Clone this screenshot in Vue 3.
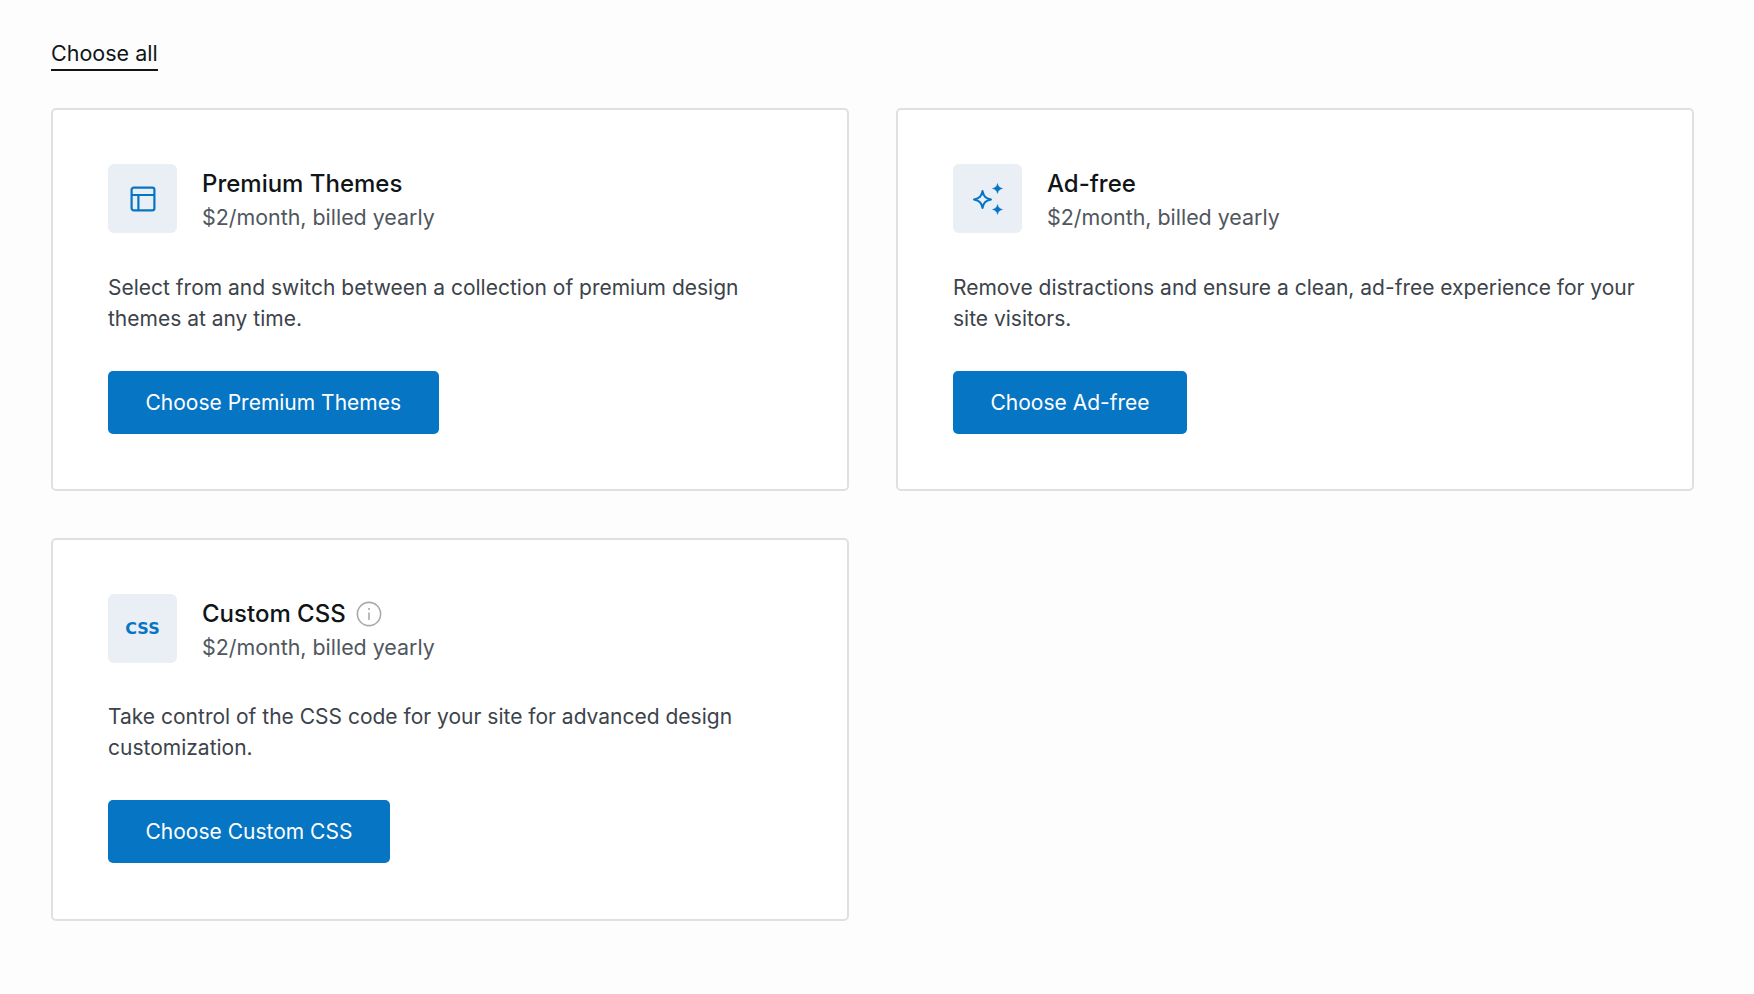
<template>
  <div class="page">
    <a class="choose-all">Choose all</a>
    <div class="grid">
      <div v-for="item in items" :key="item.name" class="card">
        <div class="head">
          <div class="icon">
            <svg v-if="item.icon === 'layout'" width="28" height="28" viewBox="0 0 28 28" fill="none" stroke="#0675c4" stroke-width="2.2">
              <rect x="2.6" y="2.6" width="22.8" height="22.8" rx="2.2" />
              <path d="M2.6 10h22.8M9.4 10v15.4" />
            </svg>
            <svg v-else-if="item.icon === 'sparkle'" width="32" height="32" viewBox="0 0 32 32">
              <path d="M10.5 8C11.6 13.2 13.2 15.2 19 16.5C13.2 17.8 11.6 19.8 10.5 25C9.4 19.8 7.8 17.8 2 16.5C7.8 15.2 9.4 13.2 10.5 8Z" fill="none" stroke="#0675c4" stroke-width="2" stroke-linejoin="round" />
              <path d="M25.5 .5C26.3 3.6 27.4 4.7 30.5 5.5C27.4 6.3 26.3 7.4 25.5 10.5C24.7 7.4 23.6 6.3 20.5 5.5C23.6 4.7 24.7 3.6 25.5 .5Z" fill="#0675c4" stroke="#0675c4" stroke-width=".4" />
              <path d="M25.5 21.5C26.3 24.6 27.4 25.7 30.5 26.5C27.4 27.3 26.3 28.4 25.5 31.5C24.7 28.4 23.6 27.3 20.5 26.5C23.6 25.7 24.7 24.6 25.5 21.5Z" fill="#0675c4" stroke="#0675c4" stroke-width=".4" />
            </svg>
            <span v-else class="css-mark">CSS</span>
          </div>
          <div class="titles">
            <div class="name">
              {{ item.name }}
              <svg v-if="item.info" class="info" width="26" height="26" viewBox="0 0 26 26" fill="none" stroke="#a7aaad" stroke-width="1.6">
                <circle cx="13" cy="13" r="11.6" />
                <path d="M13 11.5v7.5" />
                <path d="M13 7v2" />
              </svg>
            </div>
            <div class="price">$2/month, billed yearly</div>
          </div>
        </div>
        <p class="desc">{{ item.desc }}</p>
        <button class="btn">Choose {{ item.name }}</button>
      </div>
    </div>
  </div>
</template>

<script setup>
const items = [
  {
    name: "Premium Themes",
    icon: "layout",
    desc: "Select from and switch between a collection of premium design themes at any time.",
  },
  {
    name: "Ad-free",
    icon: "sparkle",
    desc: "Remove distractions and ensure a clean, ad-free experience for your site visitors.",
  },
  {
    name: "Custom CSS",
    icon: "css",
    info: true,
    desc: "Take control of the CSS code for your site for advanced design customization.",
  },
];
</script>

<style scoped>
.page {
  padding: 37px 45px 70px 51px;
  font-family: Inter, "Liberation Sans", sans-serif;
  color: #101517;
}

.choose-all {
  display: inline-block;
  font-size: 21.5px;
  line-height: 32px;
  border-bottom: 2px solid #101517;
}

.grid {
  display: grid;
  grid-template-columns: 798px 798px;
  gap: 46.5px 47px;
  margin-top: 37px;
}

.card {
  box-sizing: border-box;
  height: 383px;
  padding: 54px 55px;
  background: #fff;
  border: 2px solid #e0e0e0;
  border-radius: 5px;
}

.head {
  display: flex;
  align-items: flex-start;
  gap: 25px;
}

.icon {
  width: 69px;
  height: 69px;
  flex: none;
  display: flex;
  align-items: center;
  justify-content: center;
  background: #e9eff5;
  border-radius: 6px;
}

.css-mark {
  font-family: "DejaVu Sans", sans-serif;
  font-weight: 700;
  font-size: 16px;
  color: #0675c4;
}

.titles {
  padding-top: 3px;
}

.name {
  display: flex;
  align-items: center;
  gap: 10px;
  font-size: 24px;
  line-height: 34px;
  font-weight: 450;
}

.price {
  font-size: 21.4px;
  line-height: 33px;
  color: #50575e;
}

.desc {
  margin: 37.5px 0 0;
  font-size: 21px;
  line-height: 31.4px;
  color: #3c434a;
}

.btn {
  display: block;
  height: 63px;
  margin-top: 36.5px;
  padding: 0 37.5px;
  border: none;
  border-radius: 5px;
  background: #0675c4;
  color: #fff;
  font-family: inherit;
  font-size: 21px;
}
</style>

<style>
body {
  background: #fdfdfd;
}
</style>
